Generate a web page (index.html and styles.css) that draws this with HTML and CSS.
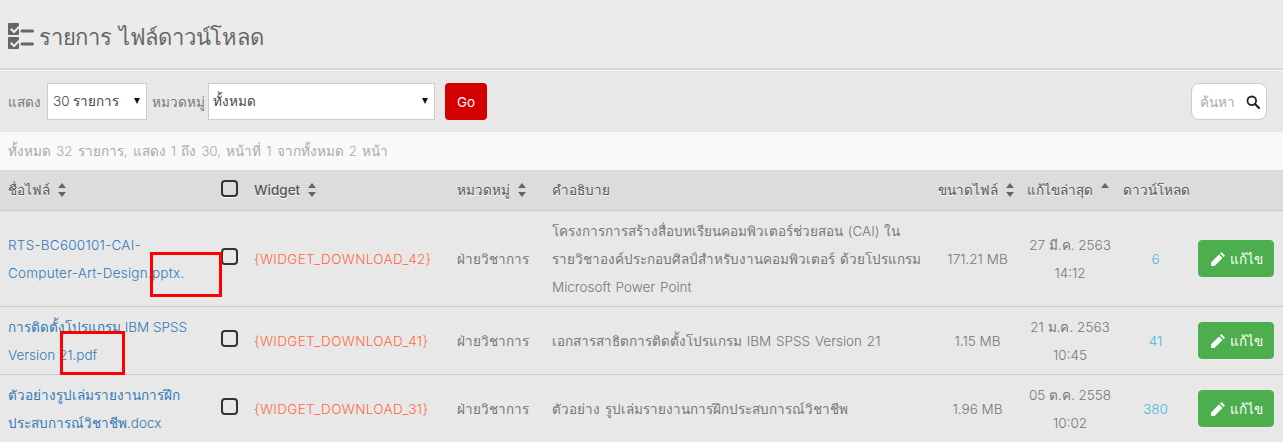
FILE: index.html
```html
<!DOCTYPE html>
<html lang="th">
<head>
<meta charset="utf-8">
<title>รายการ ไฟล์ดาวน์โหลด</title>
<link rel="stylesheet" href="styles.css">
</head>
<body>
<header class="page-head">
  <svg class="head-icon" viewBox="0 0 26 26" width="26" height="26">
    <path class="ic" d="M1 0h9a1 1 0 0 1 1 1v1.500L6 7.500 3.500 5 2 6.500l4 4 5-5V11a1 1 0 0 1-1 1H1a1 1 0 0 1-1-1V1a1 1 0 0 1 1-1zM14 6.500h10.500a1.500 1.500 0 0 1 0 3H14a1.500 1.500 0 0 1 0-3z"/>
    <path class="ic" d="M1 14h9a1 1 0 0 1 1 1v1.500l-5 5L3.500 19 2 20.500l4 4 5-5V25a1 1 0 0 1-1 1H1a1 1 0 0 1-1-1V15a1 1 0 0 1 1-1zM14 19.500h10.500a1.500 1.500 0 0 1 0 3H14a1.500 1.500 0 0 1 0-3z"/>
  </svg>
  <h1>รายการ ไฟล์ดาวน์โหลด</h1>
</header>
<div class="toolbar">
  <span class="lbl lbl-show">แสดง</span>
  <div class="sel sel-count">30 รายการ<i class="caret"></i></div>
  <span class="lbl lbl-cat">หมวดหมู่</span>
  <div class="sel sel-cat">ทั้งหมด<i class="caret"></i></div>
  <button class="go">Go</button>
  <div class="search"><span>ค้นหา</span>
    <svg viewBox="0 0 14 14" width="14" height="14"><circle cx="5.800" cy="5.800" r="4.300" fill="none" stroke="#222" stroke-width="1.800"/><path d="M9 9l4 4" stroke="#222" stroke-width="2.200" stroke-linecap="round"/></svg>
  </div>
</div>
<div class="info">ทั้งหมด 32 รายการ, แสดง 1 ถึง 30, หน้าที่ 1 จากทั้งหมด 2 หน้า</div>
<table>
  <colgroup>
    <col class="c1"><col class="c2"><col class="c3"><col class="c4"><col class="c5"><col class="c6"><col class="c7"><col class="c8"><col class="c9">
  </colgroup>
  <thead>
    <tr>
      <th>ชื่อไฟล์ <i class="sort"></i></th>
      <th><i class="check"></i></th>
      <th>Widget <i class="sort"></i></th>
      <th>หมวดหมู่ <i class="sort"></i></th>
      <th>คำอธิบาย</th>
      <th>ขนาดไฟล์ <i class="sort"></i></th>
      <th>แก้ไขล่าสุด <i class="sort up"></i></th>
      <th>ดาวน์โหลด</th>
      <th></th>
    </tr>
  </thead>
  <tbody>
    <tr class="r1">
      <td class="name"><a class="latin">RTS-BC600101-CAI-<br>Computer-Art-Design.pptx.</a><b class="mark m1"></b></td>
      <td><i class="check"></i></td>
      <td class="widget">{WIDGET_DOWNLOAD_42}</td>
      <td>ฝ่ายวิชาการ</td>
      <td class="desc">โครงการการสร้างสื่อบทเรียนคอมพิวเตอร์ช่วยสอน (CAI) ในรายวิชาองค์ประกอบศิลป์สำหรับงานคอมพิวเตอร์ ด้วยโปรแกรม Microsoft Power Point</td>
      <td class="ctr">171.21 MB</td>
      <td class="ctr">27 มี.ค. 2563<br>14:12</td>
      <td class="ctr dl">6</td>
      <td><button class="edit"><svg viewBox="0 0 16 16" width="16" height="16"><path d="M11.500 1l3.500 3.500-1.500 1.500L10 2.500zM9 3.500L12.500 7l-8 8H1v-3.500z" fill="#fff"/></svg>แก้ไข</button></td>
    </tr>
    <tr>
      <td class="name"><a>การติดตั้งโปรแกรม IBM SPSS Version 21.pdf</a><b class="mark m2"></b></td>
      <td><i class="check"></i></td>
      <td class="widget">{WIDGET_DOWNLOAD_41}</td>
      <td>ฝ่ายวิชาการ</td>
      <td class="desc">เอกสารสาธิตการติดตั้งโปรแกรม IBM SPSS Version 21</td>
      <td class="ctr">1.15 MB</td>
      <td class="ctr">21 ม.ค. 2563<br>10:45</td>
      <td class="ctr dl">41</td>
      <td><button class="edit"><svg viewBox="0 0 16 16" width="16" height="16"><path d="M11.500 1l3.500 3.500-1.500 1.500L10 2.500zM9 3.500L12.500 7l-8 8H1v-3.500z" fill="#fff"/></svg>แก้ไข</button></td>
    </tr>
    <tr>
      <td class="name"><a>ตัวอย่างรูปเล่มรายงานการฝึกประสบการณ์วิชาชีพ.docx</a></td>
      <td><i class="check"></i></td>
      <td class="widget">{WIDGET_DOWNLOAD_31}</td>
      <td>ฝ่ายวิชาการ</td>
      <td class="desc">ตัวอย่าง รูปเล่มรายงานการฝึกประสบการณ์วิชาชีพ</td>
      <td class="ctr">1.96 MB</td>
      <td class="ctr">05 ต.ค. 2558<br>10:02</td>
      <td class="ctr dl">380</td>
      <td><button class="edit"><svg viewBox="0 0 16 16" width="16" height="16"><path d="M11.500 1l3.500 3.500-1.500 1.500L10 2.500zM9 3.500L12.500 7l-8 8H1v-3.500z" fill="#fff"/></svg>แก้ไข</button></td>
    </tr>
  </tbody>
</table>
</body>
</html>
```
FILE: styles.css
```css
* { box-sizing: border-box; }
html, body { margin: 0; height: 442px; overflow: hidden; }
body { background: #e8e8e8; color: #777; font: 300 13.500px/28px Inter, "Noto Sans", sans-serif; }

.page-head { height: 70px; margin-bottom: 1px; background: #ebebeb; border-bottom: 2px solid #d6d6d6; box-shadow: 0 1px 0 #f4f4f4; display: flex; align-items: center; gap: 5px; padding: 6px 0 0 8px; }
.head-icon { flex: none; margin-top: -2px; }
.ic { fill: #666; }
h1 { margin: 0; font-size: 22px; font-weight: 300; letter-spacing: -.2px; word-spacing: 1px; color: #666; line-height: 34px; }

.toolbar { height: 61px; display: flex; align-items: center; padding: 0 16px 0 8px; }
.lbl { color: #777; }
.lbl-show { width: 39px; }
.lbl-cat { width: 56px; margin-left: 5px; }
.sel { position: relative; height: 37px; background: #fff; border: 1px solid #ccc; color: #444; padding: 0 4px 0 5px; line-height: 35px; }
.sel-count { width: 100px; }
.sel-cat { width: 227px; padding-left: 4px; }
.caret { position: absolute; right: 6px; top: 14px; border: 3.500px solid transparent; border-top: 6px solid #111; border-bottom: 0; }
.go { margin-left: 10px; width: 42px; height: 37px; border: 0; border-radius: 4px; background: #d40000; color: #fff; font: 400 13.500px Inter, "Noto Sans", sans-serif; }
.search { margin-left: auto; width: 76px; height: 37px; background: #fff; border: 1px solid #ccc; border-radius: 8px; display: flex; align-items: center; justify-content: space-between; padding: 0 6px 0 8px; color: #aaa; }

.info { height: 38px; background: #f9f9f9; padding-left: 8px; line-height: 38px; color: #aaa; word-spacing: 1.300px; }

table { width: 1283px; table-layout: fixed; border-collapse: collapse; }
.c1 { width: 213px; } .c2 { width: 33px; } .c3 { width: 203px; } .c4 { width: 95px; } .c5 { width: 386px; }
.c6 { width: 89px; } .c7 { width: 96px; } .c8 { width: 75px; } .c9 { width: 93px; }

th { height: 40px; padding: 0 8px; background: #dcdcdc; border-bottom: 1px solid #ccc; text-align: left; font-weight: 500; color: #555; white-space: nowrap; text-shadow: 0 1px 0 #fff; }
td { padding: 6px 8px 5px; border-bottom: 1px solid #ccc; line-height: 28px; vertical-align: middle; }
tbody tr { height: 68px; }
.r1 { height: 96px; }
.name { position: relative; }
a { color: #337ab7; }
.latin { letter-spacing: .25px; }
.desc { word-spacing: 1px; }
.widget { color: #ff6a42; letter-spacing: .35px; }
.ctr { text-align: center; padding-left: 6px; padding-right: 0; }
.dl { color: #46b8da; }
.check { display: block; width: 17px; height: 17px; border: 2px solid #333; border-radius: 4px; }
td .check { margin-top: -4px; }
th .check { box-shadow: 0 1px 0 #fff; margin-top: -2px; }
.sort { display: inline-block; width: 8px; height: 14px; margin-left: 4px; vertical-align: -2px; position: relative; }
.sort::before, .sort::after { content: ""; position: absolute; left: 0; border: 4px solid transparent; }
.sort::before { top: 0; border-bottom: 5px solid #666; border-top: 0; }
.sort::after { bottom: 0; border-top: 5px solid #666; border-bottom: 0; }
.sort.up::after { display: none; }
.edit { display: flex; align-items: center; justify-content: center; gap: 4px; width: 76px; height: 37px; border: 1px solid #4cae4c; border-radius: 4px; background: #4cae4c; color: #fff; font: 400 13.500px Inter, "Noto Sans", sans-serif; padding: 0; }
.mark { position: absolute; border: 3px solid #f00; pointer-events: none; }
.m1 { left: 150px; top: 41px; width: 72px; height: 45px; }
.m2 { left: 60px; top: 24px; width: 65px; height: 44px; }
```
